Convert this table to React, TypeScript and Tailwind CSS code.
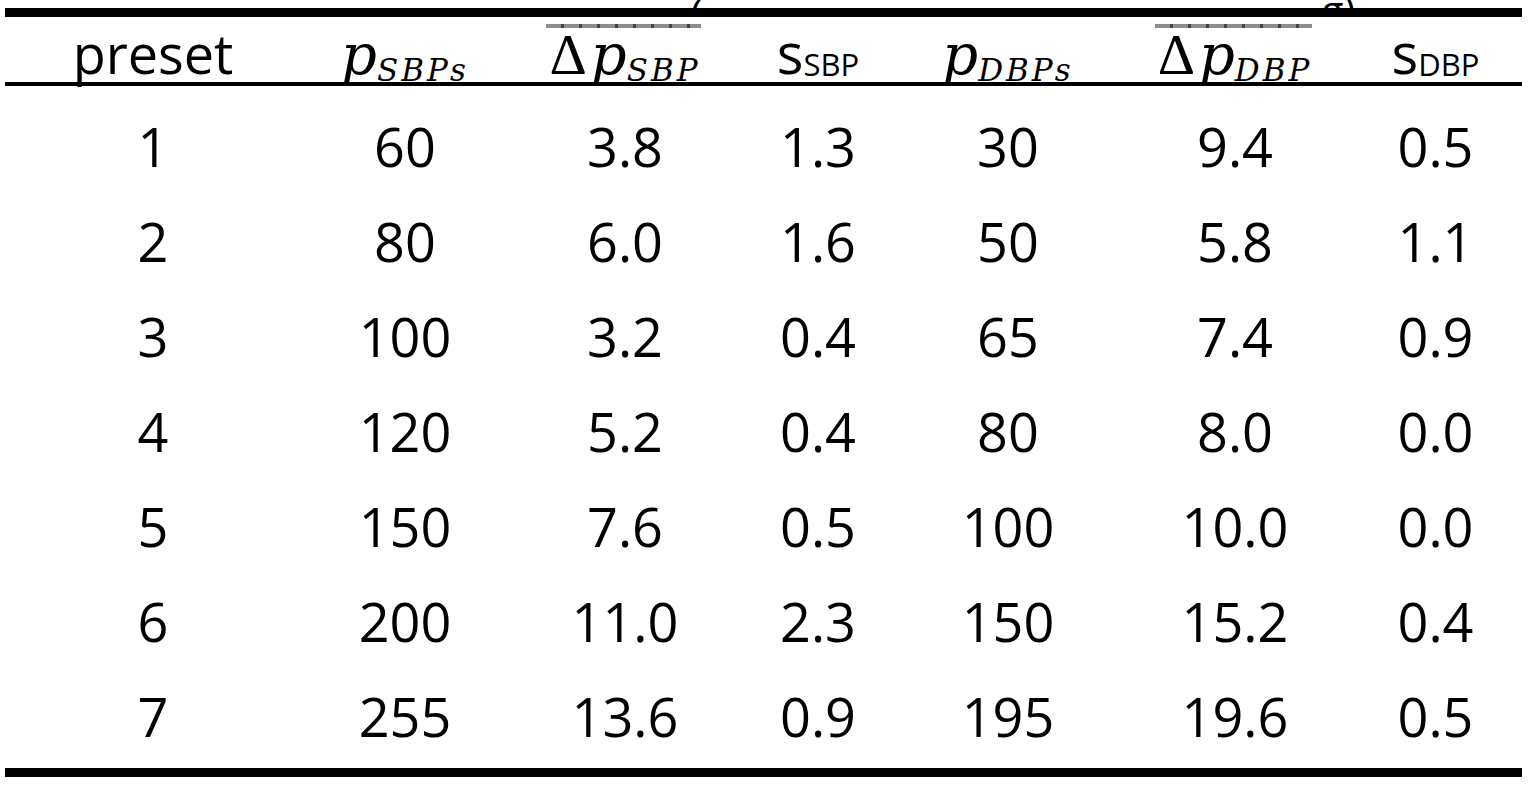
const rows = [
  ["1", "60", "3.8", "1.3", "30", "9.4", "0.5"],
  ["2", "80", "6.0", "1.6", "50", "5.8", "1.1"],
  ["3", "100", "3.2", "0.4", "65", "7.4", "0.9"],
  ["4", "120", "5.2", "0.4", "80", "8.0", "0.0"],
  ["5", "150", "7.6", "0.5", "100", "10.0", "0.0"],
  ["6", "200", "11.0", "2.3", "150", "15.2", "0.4"],
  ["7", "255", "13.6", "0.9", "195", "19.6", "0.5"],
];

const cols = "grid grid-cols-[296px_208px_232px_154px_226px_228px_173px]";
const sans = "font-['Open_Sans',sans-serif]";
const serif = "font-['Liberation_Serif',serif]";
const mathIt = "font-['DejaVu_Serif',serif] italic";

function MathP({ sub, delta }: { sub: string; delta?: boolean }) {
  return (
    <span className="relative inline-flex items-baseline leading-none">
      {delta && (
        <span className="absolute -top-[2px] -left-[3px] right-0 h-[4px] bg-[repeating-linear-gradient(90deg,#8c8c8c_0px,#8c8c8c_15px,#444_15px,#444_18px)]" />
      )}
      {delta && <span className={`${serif} text-[58px] pr-[4px]`}>Δ</span>}
      <span className={`${mathIt} text-[56px]`}>p</span>
      <span className={`${mathIt} text-[31px] relative top-[7px] tracking-[3px]`}>{sub}</span>
    </span>
  );
}

function SdText({ sub }: { sub: string }) {
  return (
    <span className={`${sans} inline-flex items-baseline leading-none`}>
      <span className="text-[56px]">s</span>
      <span className="text-[31px] relative top-[2px]">{sub}</span>
    </span>
  );
}

export default function App() {
  return (
    <div className="w-[1536px] h-[800px] bg-white text-black overflow-hidden">
      <div className="h-[8px] overflow-hidden flex items-end">
        <span className={`${sans} text-[40px] leading-none pl-[690px] translate-y-[26px]`}>(</span>
        <span className={`${sans} text-[40px] leading-none pl-[620px] translate-y-[22px]`}>g)</span>
      </div>
      <div className="ml-[5px] w-[1517px]">
        <div className="h-[9px] bg-black" />
        <div className={`${cols} h-[65px] items-baseline pt-[7px]`}>
          <div className={`${sans} text-center text-[54px] leading-none`}>preset</div>
          <div className="text-center">
            <MathP sub="SBPs" />
          </div>
          <div className="text-center">
            <MathP sub="SBP" delta />
          </div>
          <div className="text-center">
            <SdText sub="SBP" />
          </div>
          <div className="text-center">
            <MathP sub="DBPs" />
          </div>
          <div className="text-center">
            <MathP sub="DBP" delta />
          </div>
          <div className="text-center">
            <SdText sub="DBP" />
          </div>
        </div>
        <div className="h-[4px] bg-black" />
        <div className="pt-[12px]">
          {rows.map((r) => (
            <div key={r[0]} className={`${cols} h-[95px] items-center`}>
              {r.map((c, i) => (
                <div key={i} className={`${sans} text-center text-[54px] leading-none`}>
                  {c}
                </div>
              ))}
            </div>
          ))}
        </div>
        <div className="h-[9px] bg-black mt-[5px]" />
      </div>
    </div>
  );
}
